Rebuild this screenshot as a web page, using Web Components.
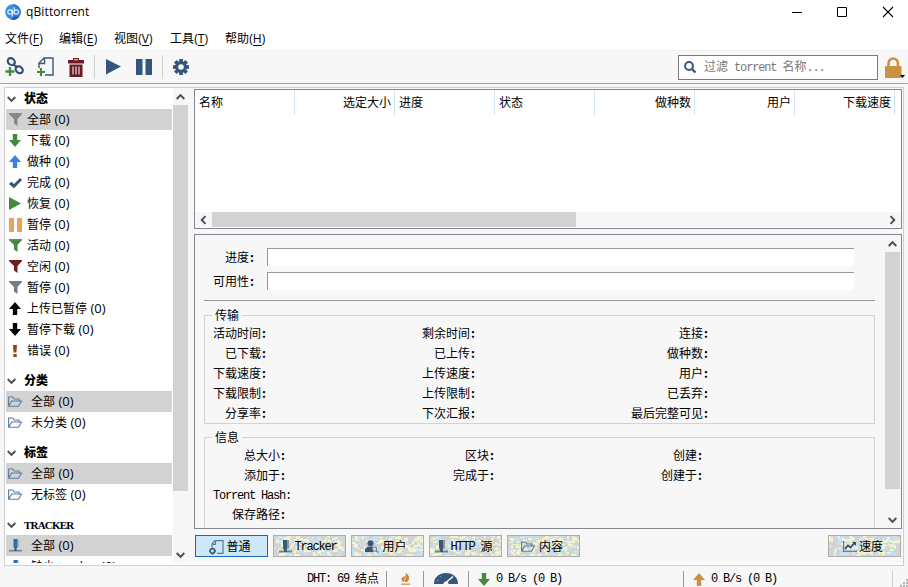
<!DOCTYPE html>
<html lang="zh-CN">
<head>
<meta charset="utf-8">
<title>qBittorrent</title>
<style>
  html, body {
    margin: 0;
    height: 100%;
    overflow: hidden;
  }

  body {
    font-family: "Open Sans", "Noto Sans CJK SC", sans-serif;
    font-size: 12px;
    line-height: 16px;
    color: #000;
    background: #f7f7f7;
  }
</style>
</head>
<body>
<qb-window></qb-window>

<script>
const MONO = '"Liberation Mono", "Noto Sans CJK SC", monospace';

const ICONS = {
  logo: `<circle cx="8" cy="8" r="7.8" fill="#3b8fe8"/><path d="M8 .2a7.8 7.8 0 0 1 0 15.6z" fill="#3577dc"/><path d="M14 13a7.8 7.8 0 0 1-8 2.6l3-3z" fill="#3550b8"/><g fill="none" stroke="#d7efff" stroke-width="1.2"><circle cx="5" cy="8" r="2.2"/><path d="M7.3 5.5v7M9.2 3v7.5"/><circle cx="11.3" cy="8" r="2.2"/></g>`,
  minimize: `<path d="M0 5.5h10" stroke="#000"/>`,
  maximize: `<path d="M.5.5h9v9h-9z" fill="none" stroke="#000"/>`,
  close: `<path d="M0 0l10 10M10 0L0 10" stroke="#000" stroke-width="1.1"/>`,
  link: `<g fill="none" stroke="#35506f" stroke-width="2.1"><ellipse cx="6.3" cy="4.6" rx="3.9" ry="3.1" transform="rotate(40 6.3 4.6)"/><ellipse cx="14.2" cy="12.7" rx="3.9" ry="3.1" transform="rotate(40 14.2 12.7)"/><path d="M7.5 7l5.3 3.6"/></g><path d="M5 10v9M.5 14.5h9" stroke="#3f8a3f" stroke-width="2.3"/>`,
  addfile: `<path d="M2 11V6l5-5h9v17H8M2 6.500h5.500V1" fill="none" stroke="#3b5878" stroke-width="1.4"/><path d="M4 11v8M0 15h8" stroke="#3f8a3f" stroke-width="2.2"/>`,
  trash: `<path d="M0 2h5V0h6v2h5v3.500H0zM1.500 6.500h13V19h-13z" fill="#6d1a22"/><path d="M6 1.800h4" stroke="#eee"/><path d="M5 8.500v8M8 8.500v8M11 8.500v8" stroke="#dccaca" stroke-width="1.300"/>`,
  play: `<path d="M0 0l15 7.500L0 15.500z"/>`,
  pause: `<path d="M0 0h6.500v16H0zM9.500 0H16v16H9.500z"/>`,
  resumed: `<path d="M0 0l12 6.500L0 13z"/>`,
  paused: `<path d="M0 0h5v14H0zM8 0h5v14H8z"/>`,
  gear: `<g transform="translate(8 8)" fill="#35567c"><circle r="5.700"/><path d="M-1.800-8h3.600L2.400 0 1.800 8h-3.600L-2.400 0z"/><path d="M-1.800-8h3.600L2.400 0 1.800 8h-3.600L-2.400 0z" transform="rotate(45)"/><path d="M-1.800-8h3.600L2.400 0 1.800 8h-3.600L-2.400 0z" transform="rotate(90)"/><path d="M-1.800-8h3.600L2.400 0 1.800 8h-3.600L-2.400 0z" transform="rotate(135)"/><circle r="2.800" fill="#f7f7f7"/></g>`,
  search: `<circle cx="5" cy="5" r="3.900" fill="none" stroke="#35567c" stroke-width="2"/><path d="M8 8l3.500 3.500" stroke="#35567c" stroke-width="2.400"/>`,
  lock: `<path d="M3.500 10V6.500a4.700 5 0 0 1 9.400 0V10" fill="none" stroke="#ca9143" stroke-width="2.600"/><rect y="9" width="16.500" height="12" rx="1" fill="#ca9143"/>`,
  caret: `<path d="M0 0h5L2.500 3z"/>`,
  funnel: `<path d="M0 0h13v1L8.500 6v7L5 10.500V6L0 1z"/>`,
  active: `<path d="M0 0h13v1L8.500 6v7L5 10.500V6L0 1z"/><path d="M0 .700h13" stroke="#777b82" stroke-width="1.400"/>`,
  down: `<path d="M3.800 0h4.400v6H12L6 13 0 6h3.800z"/>`,
  up: `<path d="M3.800 13h4.400V7H12L6 0 0 7h3.800z"/>`,
  check: `<path d="M0 6l2.300-2.300L5 6l6-6 2 2-8 8.300z"/>`,
  exclaim: `<path d="M0 0h4l-.6 7.500H.6zM.3 9h3.400v3H.3z"/>`,
  folder: `<path d="M.6 10V1h4.200l1.200 2h5v2M.8 10.300L3.500 5h10l-3 5.300z" fill="none" stroke="#5b7d9e" stroke-width="1.100"/>`,
  tracker: `<path d="M4.500 0h4v8l-1 2h-2l-1-2z" fill="#316da6"/><path d="M8 0h1.500v8L8 9z" fill="#8a98a6"/><path d="M0 11.700h13" stroke="#6c8498" stroke-width="1.600"/><path d="M5.500 10h2v2h-2z" fill="#315879"/>`,
  trackertab: `<path d="M4 0h4.500v8l-1 2h-2.500l-1-2z" fill="#3b5878"/><path d="M8.500 0H10v8L8 9z" fill="#8a98a6"/><path d="M0 11.500h13" stroke="#6c8498" stroke-width="2"/><path d="M5 10h3v2H5z" fill="#3b5878"/>`,
  fileinfo: `<path d="M3 7V4l3-3.300h8v12.600H8M3.300 4.300H6.500V1" fill="none" stroke="#5c7b97" stroke-width="1.200"/><circle cx="3.400" cy="11" r="2.300" fill="none" stroke="#415a76" stroke-width="1.700"/><path d="M3.400 7.500v1.200M3.400 13.300v1.200M0 11h1.200M5.700 11h1.200" stroke="#415a76" stroke-width="1.400"/>`,
  peers: `<circle cx="5.500" cy="3.200" r="3" fill="#35567c"/><path d="M0 12V9l3-2.500h5L9.500 8 8 12z" fill="#35567c"/><circle cx="9.500" cy="9" r="2.200" fill="#c9d8e5" stroke="#627d98"/><path d="M11 10.500l2 2" stroke="#627d98" stroke-width="1.400"/>`,
  chart: `<path d="M.6 0v10.400H14" fill="none" stroke="#65809c" stroke-width="1.200"/><path d="M2 8l3-3.500 2.500 2 4-4.500" fill="none" stroke="#314e70" stroke-width="1.700"/><path d="M8.800 1H13v4z" fill="#314e70"/>`,
  flame: `<path d="M4.500 0c4 2 5 6 1.800 9H2C-1 6 1 4 3.500 3.500 5 3 5 1.500 4.500 0z" fill="#d2863a"/><path d="M4.200 4c1 2-1.800 3-.6 5" stroke="#f4d9a8" fill="none"/><path d="M0 11.200h9" stroke="#e8a05a" stroke-width="1.600"/>`,
  gauge: `<path d="M0 11C0 4 5 0 12 0s12 4 12 11H14.500a2.500 2.500 0 0 0-5 0z" fill="#35567c"/><path d="M12 9.500l7-6" stroke="#f7f7f7" stroke-width="1.600"/><path d="M3 7l2 .8M6 3l1.200 1.500" stroke="#7e95ad"/>`,
  chevron: `<path d="M.7 1L4.500 4.800 8.300 1" fill="none" stroke="#484c5c" stroke-width="1.900"/>`,
  grip: `<path d="M6 0h2v2H6zM3 3h2v2H3zM6 3h2v2H6zM0 6h2v2H0zM3 6h2v2H3zM6 6h2v2H6z" fill="#b5b5b5"/>`
};

function define(name, html, setup) {
  const template = document.createElement('template');
  template.innerHTML = html;
  customElements.define(name, class extends HTMLElement {
    constructor() {
      super();
      this.attachShadow({ mode: 'open' }).appendChild(template.content.cloneNode(true));
    }
    connectedCallback() {
      if (setup) setup(this, (selector) => this.shadowRoot.querySelector(selector));
    }
  });
}

// <qb-icon name w h color>: w and h are the drawn box in px
define('qb-icon', `
  <style>
    :host { display: block; flex: none; white-space: normal; line-height: 0; }
    svg { display: block; overflow: visible; }
  </style>
  <svg></svg>
`, (el, $) => {
  const w = el.getAttribute('w');
  const h = el.getAttribute('h');
  const svg = $('svg');
  svg.setAttribute('width', w);
  svg.setAttribute('height', h);
  svg.setAttribute('viewBox', `0 0 ${w} ${h}`);
  svg.setAttribute('fill', el.getAttribute('color') || '#000');
  svg.innerHTML = ICONS[el.getAttribute('name')];
});

define('qb-titlebar', `
  <style>
    :host { display: flex; align-items: center; height: 23px; padding: 0 15px 0 5px; background: #fff; }
    .title { flex: 1; margin-left: 5px; letter-spacing: 0.12px; }
    .buttons { display: flex; gap: 35px; align-items: center; }
    .buttons qb-icon:last-child { margin-left: 1px; }
  </style>
  <qb-icon name="logo" w="16" h="16"></qb-icon>
  <span class="title">qBittorrent</span>
  <div class="buttons">
    <qb-icon name="minimize" w="10" h="10"></qb-icon>
    <qb-icon name="maximize" w="10" h="10"></qb-icon>
    <qb-icon name="close" w="10" h="10"></qb-icon>
  </div>
`);

define('qb-menubar', `
  <style>
    :host { display: grid; grid-template-columns: 54px 55px 56px 55px 60px; align-items: center; box-sizing: border-box; height: 28px; padding: 4px 5px 0; background: #fff; border-bottom: 1px solid #f0f0f0; letter-spacing: 0.1px; }
    u { text-underline-offset: 2px; text-decoration-thickness: 1px; }
  </style>
  <span>文件(<u>F</u>)</span>
  <span>编辑(<u>E</u>)</span>
  <span>视图(<u>V</u>)</span>
  <span>工具(<u>T</u>)</span>
  <span>帮助(<u>H</u>)</span>
`);

define('qb-toolbar', `
  <style>
    :host { display: flex; align-items: center; height: 32px; padding: 0 3px 0 5px; background: #f7f7f7; border-bottom: 1px solid #a3a3a3; }
    .sep { width: 1px; height: 24px; background: #d0d0d0; }
    .search { display: flex; align-items: center; box-sizing: border-box; width: 200px; height: 25px; margin-left: auto; padding-left: 5px; border: 1px solid #7a7a7a; background: #fff; color: #777; }
    .search span { margin-left: 8px; white-space: pre; }
    .search code { font: 12px/16px ${MONO}; letter-spacing: -1.15px; }
    .lock { display: flex; align-items: flex-end; margin-left: 7px; }
    .lock qb-icon + qb-icon { margin-left: -1px; }
  </style>
  <qb-icon name="link" w="20" h="20"></qb-icon>
  <qb-icon name="addfile" w="17" h="20" style="margin-left:12px"></qb-icon>
  <qb-icon name="trash" w="16" h="19" style="margin-left:14px"></qb-icon>
  <div class="sep" style="margin-left:10px"></div>
  <qb-icon name="play" w="15" h="16" color="#35567c" style="margin-left:11px"></qb-icon>
  <qb-icon name="pause" w="16" h="16" color="#35567c" style="margin-left:15px"></qb-icon>
  <div class="sep" style="margin-left:10px"></div>
  <qb-icon name="gear" w="16" h="16" style="margin-left:10px"></qb-icon>
  <div class="search">
    <qb-icon name="search" w="12" h="12"></qb-icon>
    <span>过滤<code> torrent </code>名称<code>...</code></span>
  </div>
  <div class="lock">
    <qb-icon name="lock" w="16" h="21"></qb-icon>
    <qb-icon name="caret" w="5" h="3"></qb-icon>
  </div>
`);

define('qb-scrollbar', `
  <style>
    :host { display: flex; flex-direction: column; width: 15px; background: #f6f6f6; }
    :host([horizontal]) { flex-direction: row; width: auto; height: 15px; }
    .arrow { display: grid; place-items: center; flex: 0 0 17px; }
    .thumb { background: #d2d2d2; flex: none; }
    .rest { flex: 1; }
    .start qb-icon { transform: rotate(180deg); }
    :host([horizontal]) .start qb-icon { transform: rotate(90deg); }
    :host([horizontal]) .end qb-icon { transform: rotate(-90deg); }
  </style>
  <div class="arrow start"><qb-icon name="chevron" w="9" h="6"></qb-icon></div>
  <div class="thumb"></div>
  <div class="rest"></div>
  <div class="arrow end"><qb-icon name="chevron" w="9" h="6"></qb-icon></div>
`, (el, $) => {
  const side = el.hasAttribute('horizontal') ? 'width' : 'height';
  $('.thumb').style[side] = el.getAttribute('thumb') + 'px';
});

define('qb-filter-group', `
  <style>
    :host { display: block; margin-bottom: 9px; }
    .head { display: flex; align-items: center; height: 21px; padding-left: 1px; }
    .head span { margin-left: 8px; font: 900 12px/16px "Liberation Serif", "Noto Sans CJK SC", serif; }
    :host([latin]) .head span { font-size: 11px; letter-spacing: -0.8px; }
  </style>
  <div class="head"><qb-icon name="chevron" w="9" h="6"></qb-icon><span></span></div>
  <slot></slot>
`, (el, $) => {
  $('.head span').textContent = el.getAttribute('heading');
});

define('qb-filter', `
  <style>
    :host { display: flex; align-items: center; height: 21px; white-space: nowrap; }
    :host([selected]) { background: #d2d2d2; }
    .icon { display: flex; justify-content: center; flex: 0 0 14px; margin-left: 2px; }
    .text { margin-left: 5px; }
    :host([wide]) .text { margin-left: 9px; }
    ::slotted(.count) { font-size: 13px; }
  </style>
  <div class="icon"><slot name="icon"></slot></div>
  <span class="text"><slot></slot></span>
`);

define('qb-sidebar', `
  <style>
    :host { display: flex; width: 183px; height: 475px; overflow: hidden; background: #fff; }
    .list { flex: 1; min-width: 0; overflow: hidden; padding: 0 1px; }
  </style>
  <div class="list"></div>
  <qb-scrollbar thumb="386"></qb-scrollbar>
`, (el, $) => {
  const item = (icon, w, h, color, text, flags = '') =>
    `<qb-filter ${flags}><qb-icon slot="icon" name="${icon}" w="${w}" h="${h}" color="${color}"></qb-icon>${text}<span class="count"> (0)</span></qb-filter>`;
  const folder = (text, flags = '') => item('folder', 14, 11, '', text, 'wide ' + flags);
  const tracker = (text, flags = '') => item('tracker', 13, 13, '', text, 'wide ' + flags);

  $('.list').innerHTML = `
    <qb-filter-group heading="状态">
      ${item('funnel', 13, 13, '#85888d', '全部', 'selected')}
      ${item('down', 12, 13, '#438a3f', '下载')}
      ${item('up', 12, 13, '#3883df', '做种')}
      ${item('check', 13, 10, '#35567c', '完成')}
      ${item('resumed', 12, 13, '#438a3f', '恢复')}
      ${item('paused', 13, 14, '#eaa35e', '暂停')}
      ${item('active', 13, 13, '#438a3f', '活动')}
      ${item('funnel', 13, 13, '#701d22', '空闲')}
      ${item('funnel', 13, 13, '#777b82', '暂停')}
      ${item('up', 12, 13, '#000', '上传已暂停')}
      ${item('down', 12, 13, '#000', '暂停下载')}
      ${item('exclaim', 4, 12, '#96420f', '错误')}
    </qb-filter-group>
    <qb-filter-group heading="分类">${folder('全部', 'selected')}${folder('未分类')}</qb-filter-group>
    <qb-filter-group heading="标签">${folder('全部', 'selected')}${folder('无标签')}</qb-filter-group>
    <qb-filter-group latin heading="TRACKER">${tracker('全部', 'selected')}${tracker('缺少 tracker')}</qb-filter-group>
  `;
});

define('qb-transfer-list', `
  <style>
    :host { display: flex; flex-direction: column; box-sizing: border-box; height: 140px; border: 1px solid #828790; background: #fff; }
    .head { display: grid; grid-template-columns: repeat(7, 100px); height: 25px; }
    .head span { padding: 5px 3px 0 4px; border-right: 1px solid #cce6f5; }
    .head .num { text-align: right; }
    .body { flex: 1; }
    qb-scrollbar { margin-bottom: 1px; }
  </style>
  <div class="head">
    <span>名称</span>
    <span class="num">选定大小</span>
    <span>进度</span>
    <span>状态</span>
    <span class="num">做种数</span>
    <span class="num">用户</span>
    <span class="num">下载速度</span>
  </div>
  <div class="body"></div>
  <qb-scrollbar horizontal thumb="364"></qb-scrollbar>
`);

define('qb-label', `
  <style>
    :host { display: block; text-align: right; white-space: nowrap; font-family: "Noto Sans CJK SC", sans-serif; }
    .colon { display: inline-block; box-sizing: border-box; width: 6px; padding-right: 1px; text-align: right; font-weight: bold; }
    :host([mono]) { font: 12px/16px ${MONO}; letter-spacing: -1.2px; }
    :host([mono]) .colon { font-weight: normal; text-align: left; }
  </style>
  <slot></slot><span class="colon">:</span>
`);

define('qb-bar', `
  <style>
    :host { display: grid; grid-template-columns: 51px 587px; column-gap: 12px; align-items: center; height: 24px; }
    .track { height: 18px; margin-top: -1px; border: 1px solid #939ba3; border-width: 1px 0 0 1px; background: #fff; box-sizing: border-box; }
  </style>
  <qb-label><slot></slot></qb-label>
  <div class="track"></div>
`);

define('qb-group-box', `
  <style>
    :host { display: block; box-sizing: border-box; border: 1px solid #d3d3d3; }
    .legend { display: block; width: max-content; height: 16px; margin: -8px 0 -1px 7px; padding: 0 3px; background: #f7f7f7; }
    .grid { display: grid; grid-auto-rows: 20px; align-items: center; }
  </style>
  <span class="legend"></span>
  <div class="grid"><slot></slot></div>
`, (el, $) => {
  $('.legend').textContent = el.getAttribute('heading');
  $('.grid').style.gridTemplateColumns = el.getAttribute('columns');
});

define('qb-details', `
  <style>
    :host { display: flex; box-sizing: border-box; height: 295px; overflow: hidden; border: 1px solid #828790; }
    .content { flex: 1; min-width: 0; padding: 10px 10px 0 9px; }
    .line { height: 1px; margin: 7px 0 14px; background: #939ba3; }
    .info { height: 130px; margin-top: 13px; }
    .transfer { height: 109px; }
    .hash { margin: 2px -5px 0 0; }
    .path { margin-top: -2px; }
    qb-scrollbar { margin-right: 1px; }
  </style>
  <div class="content">
    <qb-bar>进度</qb-bar>
    <qb-bar>可用性</qb-bar>
    <div class="line"></div>
    <qb-group-box class="transfer" heading="传输" columns="62px 209px 233px">
      <qb-label>活动时间</qb-label><qb-label>剩余时间</qb-label><qb-label>连接</qb-label>
      <qb-label>已下载</qb-label><qb-label>已上传</qb-label><qb-label>做种数</qb-label>
      <qb-label>下载速度</qb-label><qb-label>上传速度</qb-label><qb-label>用户</qb-label>
      <qb-label>下载限制</qb-label><qb-label>上传限制</qb-label><qb-label>已丢弃</qb-label>
      <qb-label>分享率</qb-label><qb-label>下次汇报</qb-label><qb-label>最后完整可见</qb-label>
    </qb-group-box>
    <qb-group-box class="info" heading="信息" columns="81px 209px 208px">
      <qb-label>总大小</qb-label><qb-label>区块</qb-label><qb-label>创建</qb-label>
      <qb-label>添加于</qb-label><qb-label>完成于</qb-label><qb-label>创建于</qb-label>
      <qb-label mono class="hash">Torrent Hash</qb-label><i></i><i></i>
      <qb-label class="path">保存路径</qb-label>
    </qb-group-box>
  </div>
  <qb-scrollbar thumb="237"></qb-scrollbar>
`);

define('qb-tab', `
  <style>
    :host { display: grid; box-sizing: border-box; width: 73px; height: 22px; border: 1px solid #adadad; background: #d3d3d3; overflow: hidden; }
    :host([active]) { border-color: #1a6bb5; background: #cde8f8; }
    :host([active]) .noise { display: none; }
    .noise, .label { grid-area: 1 / 1; }
    .noise { display: block; }
    .label { display: flex; align-items: center; justify-content: center; gap: 2px; padding: 1px 3px 0 0; white-space: pre; }
    ::slotted(code) { font: 12px/16px ${MONO}; letter-spacing: -1.2px; }
  </style>
  <svg class="noise" width="71" height="20"></svg>
  <div class="label"><slot></slot></div>
`, (el, $) => {
  // mottled fill: short runs of blue and yellow over the grey base
  let seed = 17 + el.textContent.trim().charCodeAt(0);
  const rand = (n) => {
    seed = (seed * 1103515245 + 12345) % 2147483648;
    return Math.floor(seed / 65536) % n;
  };
  let blue = '';
  let yellow = '';
  for (let i = 0; i < 210; i++) {
    const w = 2 + rand(3);
    const h = 1 + rand(3);
    const d = `M${rand(71)} ${rand(20)}h${w}v${h}h-${w}z`;
    if (i % 2) blue += d;
    else yellow += d;
  }
  $('.noise').innerHTML = `<path d="${blue}" fill="#c3e3f5"/><path d="${yellow}" fill="#f3f3cc"/>`;
});

define('qb-tabs', `
  <style>
    :host { display: flex; gap: 5px; padding: 6px 1px 0 1px; }
    .last { margin-left: auto; }
  </style>
  <qb-tab active><qb-icon name="fileinfo" w="15" h="14"></qb-icon><span>普通</span></qb-tab>
  <qb-tab><qb-icon name="trackertab" w="13" h="13"></qb-icon><code>Tracker</code></qb-tab>
  <qb-tab><qb-icon name="peers" w="13" h="13"></qb-icon><span style="margin-left:2px">用户</span></qb-tab>
  <qb-tab><qb-icon name="trackertab" w="13" h="13"></qb-icon><code>HTTP </code><span style="margin-left:-2px">源</span></qb-tab>
  <qb-tab><qb-icon name="folder" w="14" h="11"></qb-icon><span style="margin-left:2px">内容</span></qb-tab>
  <qb-tab class="last"><qb-icon name="chart" w="14" h="11"></qb-icon><span>速度</span></qb-tab>
`);

define('qb-statusbar', `
  <style>
    :host { display: grid; grid-template-columns: 387px 37px 45px 215px 209px 15px; height: 21px; background: #f7f7f7; overflow: hidden; }
    .cell { display: flex; align-items: center; box-sizing: border-box; border-right: 1px solid #939ba3; margin-top: 5px; height: 16px; white-space: pre; }
    .cell.light { border-color: #d0d0d0; }
    code { font: 12px/16px ${MONO}; letter-spacing: -1.2px; }
    .dht { justify-content: flex-end; padding-right: 7px; }
    .mid { justify-content: center; }
    .gauge { padding-bottom: 2px; }
    .rate { padding-left: 9px; gap: 6px; }
    .grip { align-self: end; justify-self: end; }
  </style>
  <div class="cell dht"><code>DHT: 69 </code><span>结点</span></div>
  <div class="cell mid"><qb-icon name="flame" w="9" h="12"></qb-icon></div>
  <div class="cell mid gauge"><qb-icon name="gauge" w="24" h="11"></qb-icon></div>
  <div class="cell rate"><qb-icon name="down" w="12" h="13" color="#438a3f"></qb-icon><code>0 B/s (0 B)</code></div>
  <div class="cell rate light"><qb-icon name="up" w="12" h="13" color="#cc9044"></qb-icon><code>0 B/s (0 B)</code></div>
  <div class="grip"><qb-icon name="grip" w="8" h="8"></qb-icon></div>
`);

define('qb-window', `
  <style>
    :host { display: flex; flex-direction: column; width: 908px; height: 587px; overflow: hidden; background: #f7f7f7; }
    .frame { display: flex; gap: 6px; box-sizing: border-box; width: 900px; height: 479px; margin: 3px 0 0 4px; border: 1px solid #d0d0d0; box-shadow: inset 0 -2px #fff; }
    .right { width: 708px; padding-top: 1px; }
    qb-details { margin-top: 5px; }
  </style>
  <qb-titlebar></qb-titlebar>
  <qb-menubar></qb-menubar>
  <qb-toolbar></qb-toolbar>
  <div class="frame">
    <qb-sidebar></qb-sidebar>
    <div class="right">
      <qb-transfer-list></qb-transfer-list>
      <qb-details></qb-details>
      <qb-tabs></qb-tabs>
    </div>
  </div>
  <qb-statusbar></qb-statusbar>
`);
</script>
</body>
</html>
